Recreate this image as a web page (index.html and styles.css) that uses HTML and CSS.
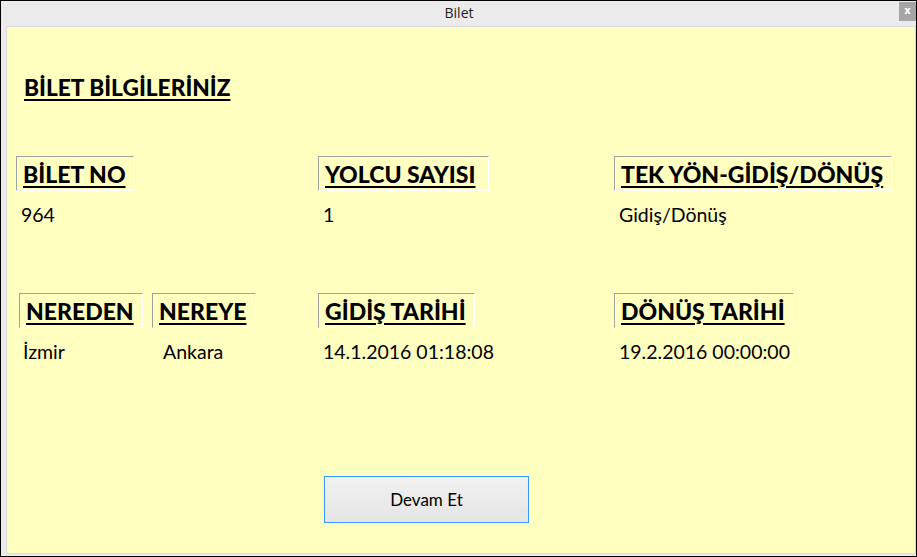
FILE: index.html
```html
<!DOCTYPE html>
<html lang="tr">
<head>
<meta charset="utf-8">
<title>Bilet</title>
<link rel="stylesheet" href="styles.css">
</head>
<body>
<div class="window">
  <div class="titlebar">
    <span class="spacer"></span>
    <span class="title">Bilet</span>
    <span class="close">x</span>
  </div>
  <div class="content">
    <h1 class="heading">BİLET BİLGİLERİNİZ</h1>
    <div class="row row-one">
      <div class="cell c-302">
        <div class="label w-118">BİLET NO</div>
        <div class="value">964</div>
      </div>
      <div class="cell c-296">
        <div class="label w-171">YOLCU SAYISI</div>
        <div class="value">1</div>
      </div>
      <div class="cell">
        <div class="label w-278">TEK YÖN-GİDİŞ/DÖNÜŞ</div>
        <div class="value">Gidiş/Dönüş</div>
      </div>
    </div>
    <div class="row row-two">
      <div class="cell c-133">
        <div class="label w-124">NEREDEN</div>
        <div class="value v-tight">İzmir</div>
      </div>
      <div class="cell c-166">
        <div class="label w-104">NEREYE</div>
        <div class="value v-wide">Ankara</div>
      </div>
      <div class="cell c-296">
        <div class="label w-157">GİDİŞ TARİHİ</div>
        <div class="value">14.1.2016 01:18:08</div>
      </div>
      <div class="cell">
        <div class="label w-180">DÖNÜŞ TARİHİ</div>
        <div class="value">19.2.2016 00:00:00</div>
      </div>
    </div>
    <div class="actions">
      <button class="btn" type="button">Devam Et</button>
    </div>
  </div>
</div>
</body>
</html>
```

FILE: styles.css
```css
html, body {
  margin: 0;
  padding: 0;
  background: #ebebeb;
}

.window {
  width: 917px;
  height: 557px;
  box-sizing: border-box;
  border: 1px solid #000;
  background: #ebebeb;
  padding: 0 0 2px 5px;
  display: flex;
  flex-direction: column;
}

.titlebar {
  height: 25px;
  display: grid;
  grid-template-columns: 1fr auto 1fr;
  align-items: start;
}

.title {
  font-family: "Open Sans", "DejaVu Sans", sans-serif;
  font-size: 14px;
  line-height: 24px;
  color: #222;
  padding-right: 4px;
}

.close {
  justify-self: end;
  margin-top: 1px;
  width: 17px;
  height: 19px;
  background: #a6a6a6;
  color: #fff;
  font-family: "DejaVu Sans", sans-serif;
  font-weight: bold;
  font-size: 10px;
  line-height: 17px;
  text-align: center;
}

.content {
  flex: 1;
  border: 1px solid #d9d9d9;
  background: #ffffc0;
  font-family: Lato, "Open Sans", sans-serif;
  color: #000;
}

.heading {
  margin: 46px 0 0 17px;
  font-size: 22.7px;
  line-height: 30px;
  font-weight: 900;
  text-decoration: underline;
  text-decoration-thickness: 2px;
  text-underline-offset: 3px;
}

.row {
  display: flex;
}

.row-one {
  margin-top: 53px;
  padding-left: 9px;
}

.row-two {
  margin-top: 67px;
  padding-left: 12px;
}

.c-302 { width: 302px; }
.c-296 { width: 296px; }
.c-133 { width: 133px; }
.c-166 { width: 166px; }

.label {
  box-sizing: border-box;
  height: 35px;
  padding: 2px 0 1px 6px;
  border-top: 1px solid #a0a0a0;
  border-left: 1px solid #a0a0a0;
  border-bottom: 1px solid #fff;
  border-right: 1px solid #fff;
  font-size: 23px;
  line-height: 30px;
  font-weight: 900;
  white-space: nowrap;
  text-decoration: underline;
  text-decoration-thickness: 2px;
  text-underline-offset: 3px;
}

.w-118 { width: 118px; }
.w-171 { width: 171px; }
.w-278 { width: 278px; }
.w-124 { width: 124px; }
.w-104 { width: 104px; }
.w-157 { width: 157px; }
.w-180 { width: 180px; }

.value {
  margin: 13px 0 0 5px;
  font-size: 19.5px;
  line-height: 22px;
  white-space: nowrap;
}

.v-tight { margin-left: 4px; }
.v-wide { margin-left: 11px; }

.actions {
  margin-top: 113px;
  padding-left: 317px;
}

.btn {
  width: 205px;
  height: 47px;
  border: 1px solid #3399ff;
  background: linear-gradient(#f1f1f1, #e5e5e5);
  font-family: Lato, "Open Sans", sans-serif;
  font-size: 17px;
  color: #000;
  padding: 0;
}
```
